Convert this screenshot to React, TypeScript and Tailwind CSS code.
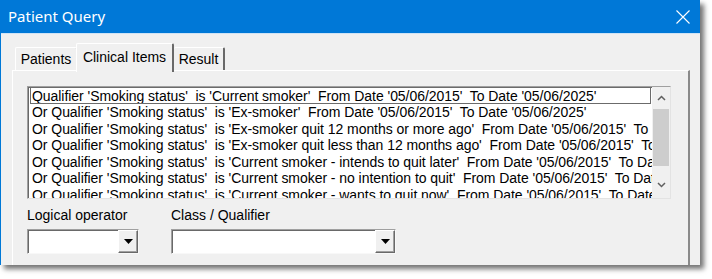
import React from "react";

const rows = [
  "Qualifier 'Smoking status'  is 'Current smoker'  From Date '05/06/2015'  To Date '05/06/2025'",
  "Or Qualifier 'Smoking status'  is 'Ex-smoker'  From Date '05/06/2015'  To Date '05/06/2025'",
  "Or Qualifier 'Smoking status'  is 'Ex-smoker quit 12 months or more ago'  From Date '05/06/2015'  To Date '05/06/2025'",
  "Or Qualifier 'Smoking status'  is 'Ex-smoker quit less than 12 months ago'  From Date '05/06/2015'  To Date '05/06/2025'",
  "Or Qualifier 'Smoking status'  is 'Current smoker - intends to quit later'  From Date '05/06/2015'  To Date '05/06/2025'",
  "Or Qualifier 'Smoking status'  is 'Current smoker - no intention to quit'  From Date '05/06/2015'  To Date '05/06/2025'",
  "Or Qualifier 'Smoking status'  is 'Current smoker - wants to quit now'  From Date '05/06/2015'  To Date '05/06/2025'",
];

function Combo({ width }: { width: string }) {
  return (
    <div
      className={`${width} h-[25px] flex bg-white border border-t-[#a0a0a0] border-l-[#a0a0a0] border-b-[#f8f8f8] border-r-[#f8f8f8] shadow-[inset_1px_1px_0_#696969]`}
    >
      <div className="flex-1" />
      <div className="w-[20px] h-full flex items-center justify-center bg-[#f0f0f0] border border-t-white border-l-white border-b-[#696969] border-r-[#696969] shadow-[inset_-1px_-1px_0_#a0a0a0]">
        <svg width="9" height="5" viewBox="0 0 9 5">
          <polygon points="0,0 9,0 4.5,5" fill="#000" />
        </svg>
      </div>
    </div>
  );
}

export default function App() {
  const font = { fontFamily: '"Liberation Sans", Arial, sans-serif' };
  return (
    <div className="w-[712px] h-[279px] bg-white">
      <div className="w-[700px] h-[265px] flex flex-col overflow-hidden border-l border-l-[#0078d7] shadow-[4px_4px_5px_rgba(0,0,0,0.55)]">
        {/* Title bar */}
        <div className="h-[33px] shrink-0 bg-[#0078d7] flex items-center justify-between pl-[7px] pr-[10px]">
          <span
            className="text-white text-[15px]"
            style={{ fontFamily: '"Noto Sans", "Open Sans", sans-serif' }}
          >
            Patient Query
          </span>
          <svg width="14" height="14" viewBox="0 0 14 14">
            <path d="M0.5 0.5 L13.5 13.5 M13.5 0.5 L0.5 13.5" stroke="#fff" strokeWidth="1.1" />
          </svg>
        </div>
        <div className="h-px bg-[#cfe3f5] shrink-0" />
        {/* Body */}
        <div className="flex-1 bg-[#f0f0f0] pl-[11px] pr-[10px] pt-[9px] flex flex-col" style={font}>
          {/* Tabs */}
          <div className="flex items-end pl-[3px] h-[27px] text-[14px] text-black">
            <div className="h-[23px] w-[62px] flex items-center justify-center border-l border-t border-l-white border-t-white border-r border-r-[#a0a0a0] rounded-t-[2px]">
              Patients
            </div>
            <div className="relative z-10 -mb-[2px] h-[29px] w-[98px] -ml-px flex items-start pt-[3px] justify-center bg-[#f0f0f0] border-l border-t border-l-white border-t-white border-r-2 border-r-[#696969] rounded-t-[2px]">
              Clinical Items
            </div>
            <div className="h-[23px] w-[51px] flex items-center justify-center border-t border-t-white border-r-2 border-r-[#696969] rounded-t-[2px]">
              Result
            </div>
          </div>
          {/* Panel */}
          <div className="flex-1 border-l border-t border-l-white border-t-white border-r-2 border-r-[#8a8a8a] pl-[14px] pt-[15px] pr-[17px] flex flex-col">
            {/* Listbox */}
            <div className="w-[644px] h-[113px] flex bg-white border border-t-[#a0a0a0] border-l-[#a0a0a0] border-b-[#e3e3e3] border-r-[#e3e3e3] shadow-[inset_1px_1px_0_#696969] overflow-hidden">
              <div className="flex-1 overflow-hidden pl-[3px] pt-[1px] text-[14px] tracking-[-0.05px] leading-[16.6px] text-black">
                {rows.map((r, i) => (
                  <div
                    key={i}
                    className={`whitespace-pre h-[16.6px] pl-[1px] ${i === 0 ? "border border-[#6b6b6b] -ml-px -mt-px h-[17px] w-[621px] overflow-hidden" : ""}`}
                  >
                    {r}
                  </div>
                ))}
              </div>
              <div className="w-[18px] h-full bg-[#f0f0f0] flex flex-col">
                <div className="h-[22px] flex items-center justify-center">
                  <svg width="9" height="6" viewBox="0 0 9 6">
                    <path d="M1 5 L4.5 1.5 L8 5" stroke="#606060" strokeWidth="1.5" fill="none" />
                  </svg>
                </div>
                <div className="h-[57px] bg-[#cdcdcd] mx-[1px]" />
                <div className="flex-1 flex items-center justify-center pt-[6px]">
                  <svg width="9" height="6" viewBox="0 0 9 6">
                    <path d="M1 1 L4.5 4.5 L8 1" stroke="#606060" strokeWidth="1.5" fill="none" />
                  </svg>
                </div>
              </div>
            </div>
            {/* Bottom controls */}
            <div className="flex gap-[32px] mt-[8px] text-[14px] text-black">
              <div className="flex flex-col gap-[5px]">
                <span className="leading-[17px]">Logical operator</span>
                <Combo width="w-[112px]" />
              </div>
              <div className="flex flex-col gap-[5px]">
                <span className="leading-[17px]">Class / Qualifier</span>
                <Combo width="w-[225px]" />
              </div>
            </div>
          </div>
        </div>
      </div>
    </div>
  );
}
